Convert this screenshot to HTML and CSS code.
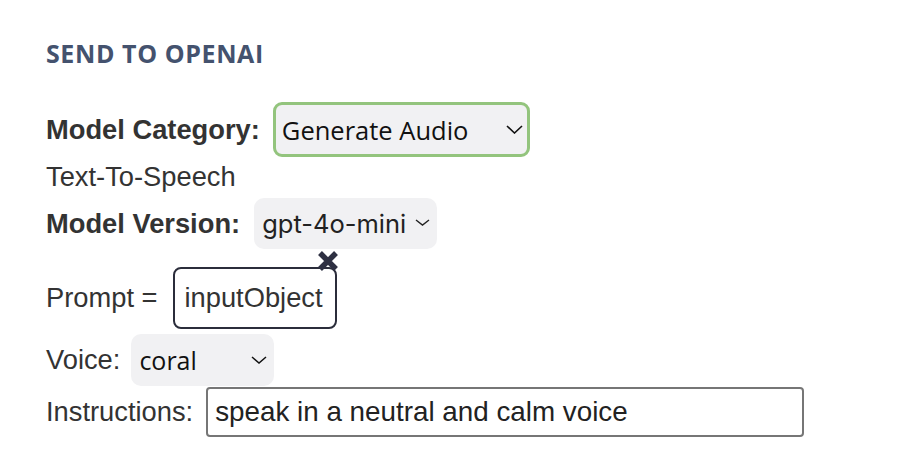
FILE: index.html
```html
<!DOCTYPE html>
<html lang="en">
<head>
<meta charset="utf-8">
<title>Send to OpenAI</title>
<link rel="stylesheet" href="styles.css">
</head>
<body>
<div class="panel">
  <h2 class="title">SEND TO OPENAI</h2>

  <div class="row row-category">
    <label class="label-bold" for="cat">Model Category:</label>
    <span class="select-wrap select-category">
      <select id="cat" class="select"><option>Generate Audio</option></select>
      <svg class="chev" width="17" height="9" viewBox="0 0 17 9"><path d="M1 1 L8.5 8 L16 1" fill="none" stroke="#111" stroke-width="1.6"/></svg>
    </span>
  </div>

  <div class="subtitle">Text-To-Speech</div>

  <div class="row row-version">
    <label class="label-bold" for="ver">Model Version:</label>
    <span class="select-wrap select-version">
      <select id="ver" class="select"><option>gpt-4o-mini</option></select>
      <svg class="chev" width="15" height="7" viewBox="0 0 15 7"><path d="M1 1 L7.5 6 L14 1" fill="none" stroke="#222" stroke-width="1.4"/></svg>
    </span>
  </div>

  <div class="row row-prompt">
    <span class="label">Prompt =</span>
    <span class="token">
      inputObject
      <svg class="remove" width="24" height="24" viewBox="0 0 24 24"><path d="M4 4 L20 20 M20 4 L4 20" stroke="#2e3042" stroke-width="5.5" stroke-linecap="butt"/></svg>
    </span>
  </div>

  <div class="row row-voice">
    <label class="label" for="voice">Voice:</label>
    <span class="select-wrap select-voice">
      <select id="voice" class="select"><option>coral</option></select>
      <svg class="chev" width="16" height="8" viewBox="0 0 16 8"><path d="M1 1 L8 7 L15 1" fill="none" stroke="#111" stroke-width="1.5"/></svg>
    </span>
  </div>

  <div class="row row-instructions">
    <label class="label" for="instr">Instructions:</label>
    <input id="instr" class="text-input" type="text" value="speak in a neutral and calm voice">
  </div>
</div>
</body>
</html>
```

FILE: styles.css
```css
html, body {
  margin: 0;
  padding: 0;
  background: #ffffff;
}

.panel {
  padding: 37px 0 0 46px;
  display: flex;
  flex-direction: column;
  align-items: flex-start;
  font-family: "Liberation Sans", Arial, sans-serif;
  font-size: 27.3px;
  color: #333333;
}

.title {
  margin: 0;
  font-family: "Open Sans", "Noto Sans", sans-serif;
  font-weight: 700;
  font-size: 25px;
  line-height: 32px;
  color: #44526e;
  letter-spacing: 0.6px;
}

.row {
  display: flex;
  align-items: center;
}

.label-bold {
  font-weight: 700;
  line-height: 30px;
}

.label {
  line-height: 30px;
}

.row-category { margin-top: 33px; }
.row-version { margin-top: 6px; }
.row-prompt { margin-top: 18px; }
.row-voice { margin-top: 5px; }
.row-instructions { margin-top: 1px; }

.subtitle {
  margin-top: 5px;
  line-height: 30px;
}

.select-wrap {
  position: relative;
  display: inline-flex;
}

.select {
  appearance: none;
  -webkit-appearance: none;
  margin: 0;
  background: #f1f1f3;
  color: #111111;
  border: none;
  outline: none;
  box-sizing: border-box;
  font-size: 25px;
}

.chev {
  position: absolute;
  pointer-events: none;
}

.select-category { margin-left: 13px; }
.select-category .select {
  width: 257px;
  height: 55px;
  border: 3px solid #93c47d;
  border-radius: 9px;
  padding: 0 0 0 6px;
  font-family: "Open Sans", "Noto Sans", sans-serif;
  font-size: 25.5px;
}
.select-category .chev { right: 7px; top: 23px; }

.select-version { margin-left: 14px; }
.select-version .select {
  width: 183px;
  height: 51px;
  border-radius: 10px;
  padding: 0 0 0 8px;
  font-family: Inter, "Liberation Sans", Arial, sans-serif;
  font-size: 25.5px;
  color: #222222;
}
.select-version .chev { right: 7px; top: 21px; }

.token {
  position: relative;
  margin-left: 15px;
  box-sizing: border-box;
  width: 164px;
  height: 62px;
  border: 2px solid #2b2d3b;
  border-radius: 8px;
  padding-left: 10px;
  display: flex;
  align-items: center;
  line-height: 30px;
}

.remove {
  position: absolute;
  right: -5px;
  top: -20px;
}

.select-voice { margin-left: 11px; }
.select-voice .select {
  width: 143px;
  height: 52px;
  border-radius: 10px;
  padding: 0 0 0 8px;
  font-family: "Open Sans", "Noto Sans", sans-serif;
}
.select-voice .chev { right: 7px; top: 22px; }

.text-input {
  margin: 0 0 0 13px;
  box-sizing: border-box;
  width: 598px;
  height: 50px;
  border: 2px solid #767676;
  border-radius: 4px;
  padding: 0 0 0 7px;
  font-family: "Liberation Sans", Arial, sans-serif;
  font-size: 27.8px;
  color: #222222;
  background: #ffffff;
  outline: none;
}
```
